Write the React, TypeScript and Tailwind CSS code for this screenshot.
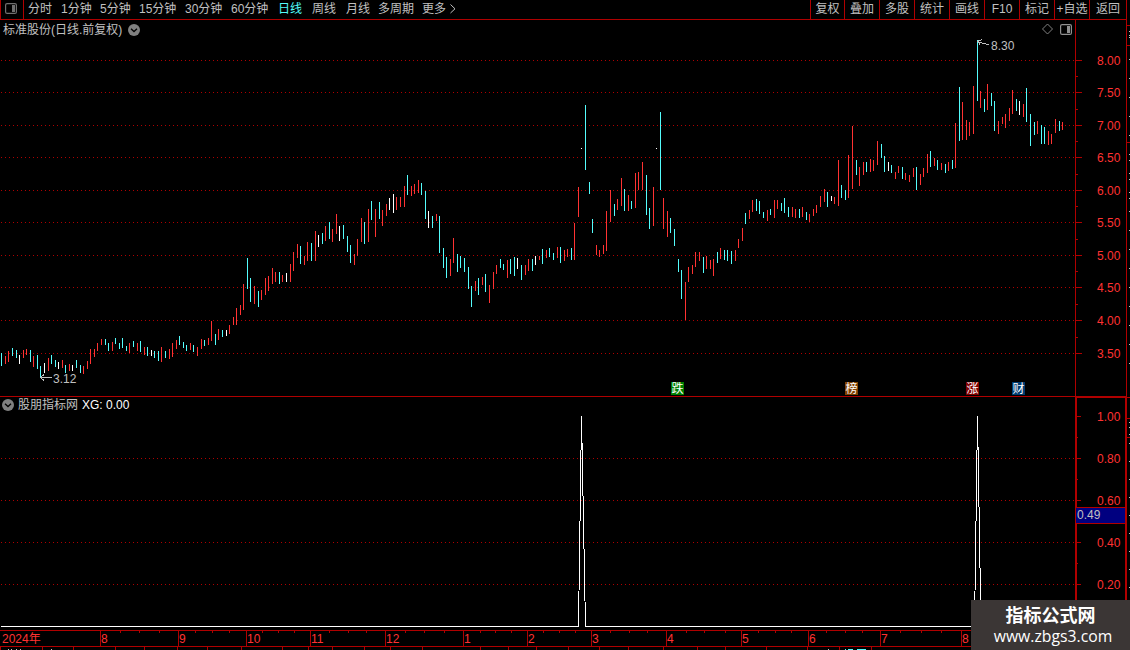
import type { ReactNode } from 'react'

type Tone = 'u' | 'd' | 'n'
type Bar = [x: number, high: number, low: number, tone: Tone]

const TONE_COLOR: Record<Tone, string> = {
  u: '#ff3232',
  d: '#54fcfc',
  n: '#ffffff',
}

const PERIODS = [
  { label: '分时', width: 'w-[33px]' },
  { label: '1分钟', width: 'w-[39px]' },
  { label: '5分钟', width: 'w-[39px]' },
  { label: '15分钟', width: 'w-[46px]' },
  { label: '30分钟', width: 'w-[46px]' },
  { label: '60分钟', width: 'w-[47px]' },
  { label: '日线', width: 'w-[34px]', active: true },
  { label: '周线', width: 'w-[34px]' },
  { label: '月线', width: 'w-[32px]' },
  { label: '多周期', width: 'w-[44px]' },
  { label: '更多', width: 'w-[26px]' },
]

const TOOLS = ['叠加', '多股', '统计', '画线', 'F10', '标记', '+自选']

// x, high and low in page pixels
const BARS: Bar[] = [
  [1, 353, 366, 'd'], [5, 356, 364, 'u'], [8, 351, 362, 'u'], [12, 348, 356, 'd'], [16, 350, 358, 'd'],
  [19, 355, 364, 'n'], [23, 350, 358, 'u'], [26, 349, 355, 'u'], [30, 350, 362, 'd'], [33, 356, 367, 'u'],
  [37, 355, 369, 'd'], [40, 366, 377, 'd'], [44, 363, 373, 'n'], [48, 358, 371, 'u'], [51, 355, 364, 'd'],
  [55, 360, 367, 'd'], [58, 362, 369, 'n'], [62, 360, 368, 'u'], [65, 365, 373, 'd'], [69, 364, 371, 'u'],
  [72, 365, 371, 'n'], [76, 360, 368, 'd'], [80, 365, 373, 'd'], [83, 366, 374, 'u'], [87, 361, 369, 'u'],
  [90, 349, 364, 'u'], [94, 349, 357, 'u'], [97, 343, 351, 'u'], [101, 339, 345, 'u'], [105, 339, 345, 'd'],
  [108, 343, 351, 'd'], [112, 342, 351, 'u'], [115, 338, 344, 'd'], [119, 343, 349, 'd'], [122, 338, 348, 'd'],
  [126, 346, 351, 'd'], [129, 343, 353, 'u'], [133, 341, 347, 'd'], [137, 343, 351, 'u'], [140, 341, 352, 'd'],
  [144, 347, 355, 'u'], [147, 347, 356, 'd'], [151, 350, 356, 'n'], [154, 351, 358, 'd'], [158, 351, 361, 'd'],
  [161, 347, 362, 'u'], [165, 351, 358, 'd'], [169, 349, 359, 'u'], [172, 343, 357, 'u'], [176, 340, 349, 'u'],
  [179, 336, 345, 'd'], [183, 342, 348, 'd'], [186, 345, 351, 'd'], [190, 343, 350, 'u'], [193, 345, 352, 'd'],
  [197, 347, 356, 'u'], [201, 339, 349, 'u'], [204, 340, 346, 'd'], [208, 338, 345, 'u'], [211, 321, 341, 'u'],
  [215, 334, 345, 'd'], [218, 329, 340, 'u'], [222, 330, 337, 'd'], [226, 330, 336, 'n'], [229, 325, 334, 'u'],
  [233, 317, 325, 'u'], [236, 308, 325, 'u'], [240, 305, 315, 'u'], [243, 284, 310, 'u'], [247, 258, 289, 'd'],
  [250, 278, 302, 'd'], [254, 286, 304, 'u'], [258, 291, 307, 'd'], [261, 290, 300, 'u'], [265, 278, 295, 'u'],
  [268, 276, 291, 'u'], [272, 268, 284, 'u'], [275, 272, 282, 'u'], [279, 272, 284, 'd'], [282, 275, 282, 'u'],
  [286, 273, 282, 'n'], [290, 264, 282, 'u'], [293, 252, 271, 'u'], [297, 244, 258, 'u'], [300, 246, 264, 'd'],
  [304, 256, 265, 'u'], [307, 242, 261, 'u'], [311, 243, 261, 'd'], [315, 231, 261, 'u'], [318, 235, 247, 'n'],
  [322, 233, 244, 'd'], [325, 226, 241, 'u'], [329, 222, 239, 'd'], [332, 229, 242, 'u'], [336, 214, 234, 'u'],
  [339, 226, 241, 'n'], [343, 225, 239, 'd'], [347, 236, 252, 'd'], [350, 245, 263, 'd'], [354, 254, 265, 'u'],
  [357, 239, 256, 'u'], [361, 218, 242, 'u'], [364, 222, 244, 'd'], [368, 209, 242, 'u'], [371, 201, 220, 'd'],
  [375, 209, 237, 'u'], [379, 202, 219, 'd'], [382, 210, 226, 'u'], [386, 204, 216, 'u'], [389, 198, 210, 'n'],
  [393, 194, 213, 'n'], [396, 197, 210, 'u'], [400, 197, 207, 'u'], [404, 186, 207, 'u'], [407, 175, 195, 'd'],
  [411, 186, 196, 'u'], [414, 184, 194, 'u'], [418, 180, 193, 'u'], [421, 183, 195, 'd'], [425, 191, 219, 'd'],
  [428, 211, 228, 'n'], [432, 216, 228, 'd'], [436, 214, 221, 'u'], [439, 216, 253, 'd'], [443, 248, 268, 'd'],
  [446, 257, 278, 'd'], [450, 259, 276, 'u'], [453, 238, 263, 'u'], [457, 254, 272, 'd'], [460, 256, 268, 'd'],
  [464, 258, 272, 'd'], [468, 267, 289, 'd'], [471, 286, 307, 'd'], [475, 281, 291, 'u'], [478, 278, 295, 'd'],
  [482, 277, 285, 'u'], [485, 274, 292, 'd'], [489, 285, 303, 'u'], [493, 272, 289, 'u'], [496, 265, 274, 'u'],
  [500, 259, 268, 'd'], [503, 264, 270, 'd'], [507, 260, 278, 'u'], [510, 259, 274, 'd'], [514, 257, 276, 'd'],
  [517, 258, 269, 'n'], [521, 265, 280, 'd'], [525, 265, 275, 'u'], [528, 259, 271, 'u'], [532, 259, 271, 'd'],
  [535, 256, 265, 'n'], [539, 256, 260, 'u'], [542, 249, 264, 'd'], [546, 250, 258, 'u'], [549, 248, 257, 'd'],
  [553, 253, 260, 'd'], [557, 247, 258, 'u'], [560, 247, 263, 'd'], [564, 250, 261, 'u'], [567, 249, 257, 'u'],
  [571, 248, 260, 'd'], [574, 223, 260, 'u'], [578, 187, 217, 'u'], [581, 148, 149, 'n'], [585, 105, 170, 'd'],
  [589, 182, 194, 'd'], [592, 219, 233, 'd'], [596, 245, 255, 'u'], [599, 250, 257, 'u'], [603, 245, 254, 'u'],
  [606, 211, 251, 'u'], [610, 190, 222, 'u'], [614, 204, 216, 'd'], [617, 199, 210, 'u'], [621, 178, 206, 'u'],
  [624, 189, 211, 'd'], [628, 195, 211, 'u'], [631, 201, 209, 'd'], [635, 173, 208, 'u'], [638, 172, 190, 'u'],
  [642, 162, 190, 'u'], [646, 175, 215, 'd'], [649, 208, 229, 'd'], [653, 187, 226, 'u'], [656, 148, 149, 'n'],
  [660, 112, 190, 'd'], [663, 198, 229, 'u'], [667, 211, 237, 'u'], [670, 218, 233, 'd'], [674, 229, 246, 'd'],
  [678, 259, 272, 'd'], [681, 270, 299, 'd'], [685, 282, 320, 'u'], [688, 267, 282, 'u'], [692, 265, 274, 'u'],
  [695, 252, 267, 'u'], [699, 252, 261, 'u'], [703, 257, 273, 'd'], [706, 256, 269, 'u'], [710, 260, 269, 'u'],
  [713, 259, 276, 'u'], [717, 252, 263, 'd'], [720, 248, 259, 'u'], [724, 250, 260, 'd'], [727, 250, 261, 'd'],
  [731, 251, 264, 'd'], [735, 250, 261, 'u'], [738, 239, 248, 'u'], [742, 228, 241, 'u'], [745, 213, 224, 'd'],
  [749, 210, 219, 'u'], [752, 200, 212, 'u'], [756, 199, 211, 'd'], [759, 201, 214, 'd'], [763, 212, 218, 'd'],
  [767, 210, 221, 'u'], [770, 209, 215, 'd'], [774, 200, 218, 'u'], [777, 200, 209, 'u'], [781, 203, 211, 'd'],
  [784, 198, 213, 'd'], [788, 207, 217, 'd'], [792, 207, 217, 'u'], [795, 209, 218, 'u'], [799, 209, 218, 'd'],
  [802, 207, 217, 'u'], [806, 212, 220, 'd'], [809, 214, 222, 'u'], [813, 209, 216, 'u'], [816, 205, 213, 'u'],
  [820, 196, 207, 'u'], [824, 189, 202, 'u'], [827, 192, 207, 'd'], [831, 196, 201, 'n'], [834, 197, 204, 'u'],
  [838, 160, 206, 'u'], [841, 185, 198, 'd'], [845, 190, 200, 'd'], [848, 155, 198, 'u'], [852, 126, 189, 'u'],
  [856, 160, 175, 'd'], [859, 167, 186, 'u'], [863, 162, 175, 'u'], [866, 162, 172, 'd'], [870, 159, 172, 'u'],
  [873, 160, 171, 'u'], [877, 141, 165, 'u'], [881, 144, 158, 'd'], [884, 156, 172, 'd'], [888, 162, 171, 'n'],
  [891, 165, 173, 'd'], [895, 172, 179, 'u'], [898, 166, 173, 'u'], [902, 167, 179, 'd'], [905, 173, 180, 'u'],
  [909, 175, 182, 'u'], [913, 168, 177, 'u'], [916, 167, 190, 'd'], [920, 174, 185, 'u'], [923, 168, 177, 'u'],
  [927, 154, 173, 'u'], [930, 151, 167, 'd'], [934, 158, 166, 'u'], [937, 160, 170, 'd'], [941, 163, 170, 'u'],
  [945, 164, 173, 'd'], [948, 162, 171, 'u'], [952, 160, 169, 'd'], [955, 123, 168, 'u'], [959, 87, 141, 'd'],
  [962, 102, 140, 'u'], [966, 120, 140, 'u'], [969, 122, 136, 'u'], [973, 86, 134, 'u'], [977, 40, 101, 'd'],
  [980, 91, 108, 'u'], [984, 99, 112, 'd'], [987, 84, 110, 'u'], [991, 93, 106, 'd'], [994, 101, 131, 'd'],
  [998, 121, 134, 'u'], [1002, 117, 124, 'u'], [1005, 114, 128, 'u'], [1009, 108, 121, 'u'], [1012, 90, 114, 'u'],
  [1016, 99, 111, 'd'], [1019, 101, 115, 'n'], [1023, 104, 117, 'u'], [1026, 88, 122, 'd'], [1030, 114, 146, 'd'],
  [1034, 122, 135, 'd'], [1037, 121, 134, 'u'], [1041, 125, 144, 'd'], [1044, 127, 144, 'd'], [1048, 131, 145, 'u'],
  [1051, 134, 144, 'u'], [1055, 119, 133, 'u'], [1059, 121, 131, 'd'], [1062, 122, 130, 'u'],
]

const PRICE_LEVELS: [string, number][] = [
  ['8.00', 60], ['7.50', 92], ['7.00', 125], ['6.50', 157], ['6.00', 190],
  ['5.50', 222], ['5.00', 255], ['4.50', 287], ['4.00', 320], ['3.50', 353],
]
const PRICE_MINOR = [76, 109, 141, 174, 206, 239, 271, 304, 337]

const XG_LEVELS: [string, number][] = [
  ['1.00', 416], ['0.80', 458], ['0.60', 500], ['0.40', 542], ['0.20', 584],
]
const XG_MINOR = [437, 479, 521, 563, 605]

const MONTHS = [
  { label: '2024年', width: 'w-[100px]' },
  { label: '8', width: 'w-[78px]' },
  { label: '9', width: 'w-[68px]' },
  { label: '10', width: 'w-[64px]' },
  { label: '11', width: 'w-[75px]' },
  { label: '12', width: 'w-[78px]' },
  { label: '1', width: 'w-[64px]' },
  { label: '2', width: 'w-[64px]' },
  { label: '3', width: 'w-[75px]' },
  { label: '4', width: 'w-[75px]' },
  { label: '5', width: 'w-[67px]' },
  { label: '6', width: 'w-[72px]' },
  { label: '7', width: 'w-[81px]' },
  { label: '8', width: 'w-[60px]' },
]
const WEEK_TICKS = [
  120, 139, 159, 195, 212, 229, 262, 278, 294, 329, 348, 366, 405, 424, 444, 480, 495, 511, 543, 559, 575,
  610, 629, 647, 686, 704, 725, 758, 775, 791, 826, 845, 862, 900, 921, 941,
]
const TAB_EDGES = [
  0, 42, 73, 115, 144, 177, 207, 241, 282, 308, 332, 364, 390, 422, 480, 508, 536, 568, 599, 628, 663, 697,
  725, 766, 807, 839, 871,
]

const SIDE_RED = [25, 45, 142, 397, 418, 437]
const SIDE_GRAY = [
  31, 35, 37, 59, 78, 97, 116, 135, 154, 160, 173, 179, 192, 198, 211, 230, 249, 268, 287, 306, 325, 344, 363,
  422, 427, 434, 443, 461, 479, 497, 515, 533, 551, 569, 587,
]

const BADGES = [
  { label: '跌', className: 'left-[671px] bg-[#008000]' },
  { label: '榜', className: 'left-[845px] bg-[#804000]' },
  { label: '涨', className: 'left-[966px] bg-[#800000]' },
  { label: '财', className: 'left-[1012px] bg-[#003c70]' },
]

export default function App() {
  return (
    <div className="flex h-[650px] w-[1130px] overflow-hidden bg-black font-['Liberation_Sans','Noto_Sans_CJK_SC',sans-serif] text-xs text-[#c0c0c0]">
      <div className="relative flex w-[1127px] flex-col">
        <Toolbar />
        <PricePanel />
        <IndicatorPanel />
        <TimeAxis />
        <BottomTabs />
        <Watermark />
      </div>
      <SideStrip />
    </div>
  )
}

function Toolbar() {
  return (
    <header className="flex h-5 shrink-0 border-b border-[#b00000] leading-[19px] whitespace-nowrap">
      <div className="flex w-6 border-x border-[#b00000] pt-[3px] pl-1">
        <PanelIcon color="#707070" />
      </div>
      <nav className="flex flex-1 pl-1">
        {PERIODS.map((p) => (
          <span key={p.label} className={`${p.width} ${p.active ? 'text-[#54fcfc]' : ''}`}>{p.label}</span>
        ))}
        <svg className="mt-1 ml-0.5 h-[10px] w-[6px]" viewBox="0 0 6 10" fill="none" stroke="#c0c0c0">
          <path d="M0.5 0.5L5 4.8L0.5 9" />
        </svg>
      </nav>
      <div className="flex text-center">
        <Tool className="w-[34px]">复权</Tool>
        {TOOLS.map((t) => (
          <Tool key={t} className="w-[35px]">{t}</Tool>
        ))}
        <Tool className="w-[38px] border-r">返回</Tool>
      </div>
    </header>
  )
}

function Tool({ className, children }: { className: string; children: ReactNode }) {
  return <span className={`border-l border-[#b00000] ${className}`}>{children}</span>
}

function PricePanel() {
  return (
    <section className="relative h-[376px] shrink-0">
      <svg className="block h-[376px] w-[1127px]" viewBox="0 20 1127 376" shapeRendering="crispEdges">
        {PRICE_LEVELS.map(([label, y]) => (
          <GridLine key={label} y={y} label={label} tick={6} dotted />
        ))}
        {PRICE_MINOR.map((y) => (
          <rect key={y} x={1076} y={y} width={2} height={1} fill="#b00000" />
        ))}
        <path d="M1075.5 20V396M1126.5 20V396" stroke="#b00000" />
        {BARS.map(([x, high, low, tone]) => (
          <rect key={x} x={x} y={high} width={1} height={low - high} fill={TONE_COLOR[tone]} />
        ))}
        {/* Period low and high markers */}
        <g stroke="#c0c0c0" fill="none">
          <path d="M40 377.5H52M44 374.5L40.5 377.5L44 380.5" />
          <path d="M977 41.5L989 45M982 39.5L977.5 41.5L980 44.5" />
        </g>
        <text x={53} y={383} fontSize={12} fill="#c0c0c0">3.12</text>
        <text x={991} y={50} fontSize={12} fill="#c0c0c0">8.30</text>
      </svg>

      <div className="absolute top-0 left-[3px] flex h-[19px] items-center gap-[6px]">
        <span className="leading-[18px]">标准股份(日线.前复权)</span>
        <ChevronBadge />
      </div>
      <div className="absolute top-[3px] left-[1042px] flex items-center gap-[7px]">
        <svg className="h-[12px] w-[11px]" viewBox="0 0 11 12" fill="none" stroke="#808080">
          <path d="M5.5 1L10.5 6L5.5 11L0.5 6Z" />
        </svg>
        <PanelIcon color="#909090" />
      </div>

      {BADGES.map((b) => (
        <span key={b.label} className={`absolute top-[362px] h-[13px] w-[13px] text-center leading-[14px] text-white ${b.className}`}>
          {b.label}
        </span>
      ))}
    </section>
  )
}

function IndicatorPanel() {
  return (
    <section className="relative h-[234px] shrink-0">
      <svg className="block h-[234px] w-[1127px]" viewBox="0 396 1127 234" shapeRendering="crispEdges">
        {XG_LEVELS.map(([label, y], i) => (
          <GridLine key={label} y={y} label={label} tick={5} dotted={i > 0} />
        ))}
        {XG_MINOR.map((y) => (
          <rect key={y} x={1077} y={y} width={1} height={1} fill="#b00000" />
        ))}
        <rect x={0} y={396} width={1127} height={1} fill="#b00000" />
        <rect x={1075} y={396} width={52} height={2} fill="#b00000" />
        <rect x={1075} y={396} width={2} height={234} fill="#b00000" />
        <rect x={1125} y={396} width={2} height={234} fill="#b00000" />
        <polyline
          points="1,626.5 578.5,626.5 581.5,416 585.5,626.5 974.5,626.5 977.5,416 981,626.5 1063,626.5"
          fill="none"
          stroke="#ffffff"
        />
      </svg>

      <div className="absolute top-0 left-[2px] flex h-[18px] items-center leading-[18px]">
        <ChevronBadge />
        <span className="ml-1">股朋指标网</span>
        <span className="ml-1 text-white">XG: 0.00</span>
      </div>
      <div className="absolute top-[111px] left-[1076px] h-[17px] w-[49px] border-y border-[#b00000] bg-[#000080] pl-px leading-[15px]">
        0.49
      </div>
    </section>
  )
}

function GridLine({ y, label, tick, dotted }: { y: number; label: string; tick: number; dotted: boolean }) {
  return (
    <g>
      {dotted && <path d={`M1 ${y + 0.5}H1075`} stroke="#b00000" strokeDasharray="1 3" />}
      <rect x={1076} y={y} width={tick} height={1} fill="#b00000" />
      <text x={1097} y={y + 5} fontSize={12} fill="#ff3232">{label}</text>
    </g>
  )
}

function TimeAxis() {
  return (
    <div className="relative flex h-[17px] shrink-0 border-y border-[#b00000] leading-[16px] text-[#ff3232]">
      {MONTHS.map((m, i) => (
        <span key={i} className={`${m.width} shrink-0 ${i > 0 ? 'border-l border-[#b00000]' : 'pl-0.5'}`}>
          {m.label}
        </span>
      ))}
      <svg className="absolute top-0 left-0 h-[2px] w-[1127px]" viewBox="0 0 1127 2">
        {WEEK_TICKS.map((x) => (
          <rect key={x} x={x} y={0} width={1} height={2} fill="#b00000" />
        ))}
      </svg>
    </div>
  )
}

// Only the top edge of the tab row is visible
function BottomTabs() {
  return (
    <svg className="block h-[3px] w-[1127px] shrink-0" viewBox="0 0 1127 3" shapeRendering="crispEdges">
      {TAB_EDGES.map((x) => (
        <rect key={x} x={x} y={0} width={1} height={3} fill="#b00000" />
      ))}
      <path d="M8 2.5H9M11 2.5H12M16 2.5H17M20 2.5H21M51 2.5H52M828 2.5H829" stroke="#c0c0c0" />
      <path d="M845 2.5H846M848 2.5H853M857 2.5H866" stroke="#54fcfc" />
    </svg>
  )
}

function SideStrip() {
  return (
    <svg className="block h-[650px] w-[3px]" viewBox="0 0 3 650">
      {SIDE_RED.map((y) => (
        <rect key={y} x={0} y={y} width={3} height={1} fill="#b00000" />
      ))}
      {SIDE_GRAY.map((y) => (
        <rect key={y} x={2} y={y} width={1} height={1} fill="#c0c0c0" />
      ))}
    </svg>
  )
}

function Watermark() {
  return (
    <div className="absolute top-[600px] left-[971px] h-[50px] w-[159px] bg-[#3b3635] pt-[5px] text-center whitespace-nowrap text-white">
      <p className="text-lg leading-[22px] font-bold">指标公式网</p>
      <p className="pl-[5px] font-['Open_Sans','Noto_Sans',sans-serif] text-[15.75px] leading-[19px]">www.zbgs3.com</p>
    </div>
  )
}

function ChevronBadge() {
  return (
    <svg className="h-3 w-3" viewBox="0 0 12 12">
      <circle cx="6" cy="6" r="6" fill="#808080" />
      <path d="M3 4.8L6 7.6L9 4.8" fill="none" stroke="#000000" strokeWidth="1.3" />
    </svg>
  )
}

function PanelIcon({ color }: { color: string }) {
  return (
    <svg className="h-[11px] w-3" viewBox="0 0 12 11">
      <rect x="0.6" y="0.6" width="10.8" height="9.8" rx="1.5" fill="none" stroke={color} strokeWidth="1.2" />
      <rect x="7" y="2" width="3" height="7" fill={color} />
    </svg>
  )
}
